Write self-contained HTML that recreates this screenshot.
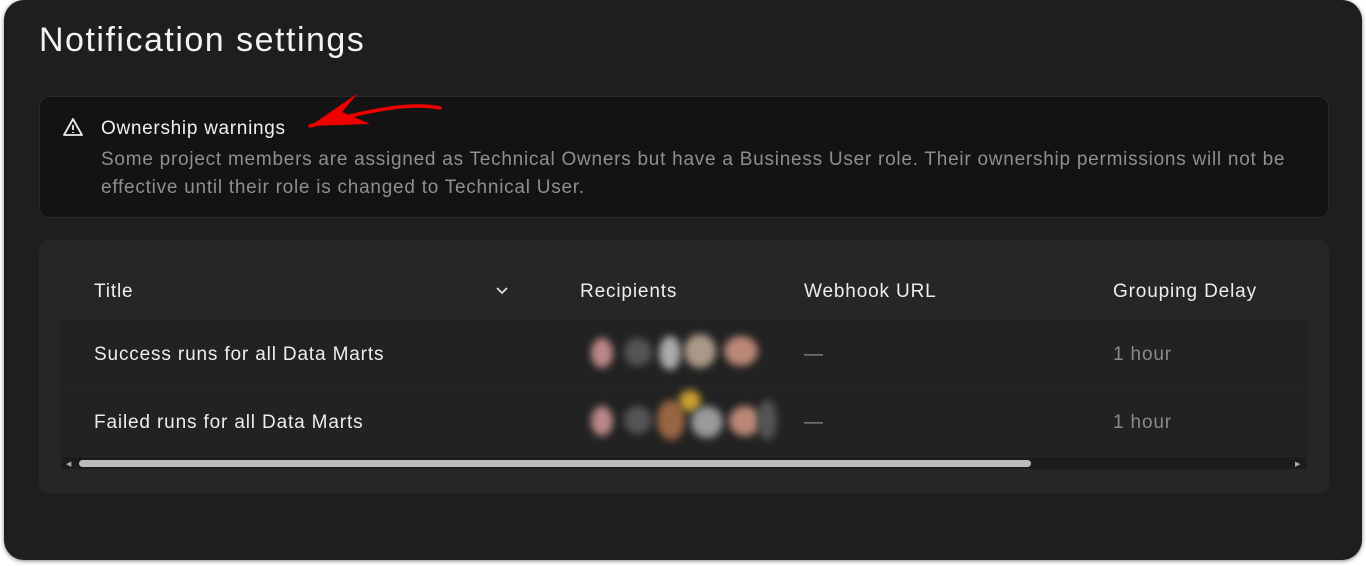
<!DOCTYPE html><html><head><style>
body{margin:0;width:1366px;height:566px;background:#fff;font-family:"Liberation Sans",sans-serif;overflow:hidden;position:relative}
.card{position:absolute;left:4px;top:0;width:1358px;height:560px;background:#1e1e1e;border-radius:20px;box-shadow:0 1px 4px rgba(0,0,0,.5)}
h1{position:absolute;left:35px;top:21px;margin:0;font-weight:400;font-size:34px;color:#f2f2f2;letter-spacing:1.5px}
.warn{position:absolute;left:35px;top:96px;width:1288px;height:120px;background:#131313;border:1px solid #2a2a2a;border-radius:10px}
.wt{position:absolute;top:118px;font-size:19px;color:#f0f0f0;letter-spacing:.7px}
.wd{position:absolute;top:146px;font-size:19px;line-height:28px;color:#8f8f8f;width:1220px;letter-spacing:.75px;white-space:nowrap}
.tbl{position:absolute;left:35px;top:240px;width:1290px;height:253px;background:#262626;border-radius:10px}
.row{position:absolute;left:22px;width:1246px;height:68px;background:#222}
.t{position:absolute;font-size:19px;color:#eee;letter-spacing:.85px}
.g{color:#8a8a8a}
.av{position:absolute;border-radius:50%;filter:blur(4px)}
</style></head><body>
<div class="card">
<h1>Notification settings</h1>
<div class="warn"></div>
<svg style="position:absolute;left:58px;top:117px" width="22" height="20" viewBox="0 0 22 20"><path d="M11 2 L20 18 H2 Z" fill="none" stroke="#eee" stroke-width="1.8" stroke-linejoin="round"/><path d="M11 8v5M11 15v1" stroke="#eee" stroke-width="1.8"/></svg>
<div class="wt" style="left:97px">Ownership warnings</div>
<div class="wd" style="left:97px">Some project members are assigned as Technical Owners but have a Business User role. Their ownership permissions will not be<br>effective until their role is changed to Technical User.</div>
<svg style="position:absolute;left:296px;top:88px" width="150" height="45" viewBox="0 0 150 45">
<path d="M140 20 C110 14 70 22 10 38" stroke="#e00" stroke-width="3.5" fill="none" stroke-linecap="round"/>
<path d="M10 38 L58 5 L42 24 L70 36 Z" fill="#e00"/>
</svg>
<div class="tbl">
<div class="row" style="top:79px"></div>
<div class="row" style="top:148px"></div>
<div class="t" style="left:55px;top:41px">Title</div>
<svg style="position:absolute;left:456px;top:46px" width="14" height="10"><path d="M2 2l5 5 5-5" stroke="#ddd" stroke-width="1.8" fill="none"/></svg>
<div class="t" style="left:541px;top:41px">Recipients</div>
<div class="t" style="left:765px;top:41px">Webhook URL</div>
<div class="t" style="left:1074px;top:41px">Grouping Delay</div>
<div class="t" style="left:55px;top:104px">Success runs for all Data Marts</div>
<div class="t" style="left:55px;top:172px">Failed runs for all Data Marts</div>
<div class="t g" style="left:765px;top:104px">—</div>
<div class="t g" style="left:765px;top:172px">—</div>
<div class="t g" style="left:1074px;top:104px">1 hour</div>
<div class="t g" style="left:1074px;top:172px">1 hour</div>
<div class="av" style="left:552px;top:98px;width:22px;height:30px;background:#b88"></div>
<div class="av" style="left:585px;top:98px;width:28px;height:28px;background:#555"></div>
<div class="av" style="left:620px;top:96px;width:22px;height:34px;background:#aaa"></div>
<div class="av" style="left:645px;top:94px;width:32px;height:34px;background:#a98"></div>
<div class="av" style="left:685px;top:96px;width:34px;height:30px;background:#b87"></div>
<div class="av" style="left:552px;top:166px;width:22px;height:30px;background:#b88"></div>
<div class="av" style="left:585px;top:166px;width:28px;height:28px;background:#555"></div>
<div class="av" style="left:618px;top:160px;width:28px;height:40px;background:#964"></div>
<div class="av" style="left:640px;top:150px;width:22px;height:22px;background:#c9a030"></div>
<div class="av" style="left:652px;top:166px;width:32px;height:32px;background:#999"></div>
<div class="av" style="left:690px;top:166px;width:32px;height:30px;background:#b87"></div>
<div class="av" style="left:718px;top:160px;width:20px;height:40px;background:#555"></div>
<div style="position:absolute;left:22px;top:217px;width:1246px;height:12px;background:#1c1c1c"></div>
<div style="position:absolute;left:40px;top:220px;width:952px;height:7px;background:#bbb;border-radius:4px"></div>
<div style="position:absolute;left:27px;top:220px;color:#aaa;font-size:7px">◀</div>
<div style="position:absolute;left:1256px;top:220px;color:#aaa;font-size:7px">▶</div>
</div>
</div>
</body></html>
